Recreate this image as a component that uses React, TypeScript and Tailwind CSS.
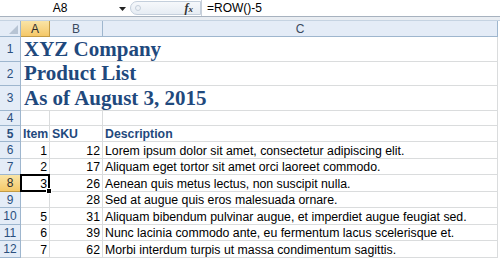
import React from "react";

const rows = [
  { n: 6, item: "1", sku: "12", desc: "Lorem ipsum dolor sit amet, consectetur adipiscing elit.", h: "h-[17px]" },
  { n: 7, item: "2", sku: "17", desc: "Aliquam eget tortor sit amet orci laoreet commodo.", h: "h-[16px]" },
  { n: 8, item: "3", sku: "26", desc: "Aenean quis metus lectus, non suscipit nulla.", h: "h-[17px]", active: true },
  { n: 9, item: "", sku: "28", desc: "Sed at augue quis eros malesuada ornare.", h: "h-[16px]" },
  { n: 10, item: "5", sku: "31", desc: "Aliquam bibendum pulvinar augue, et imperdiet augue feugiat sed.", h: "h-[17px]" },
  { n: 11, item: "6", sku: "39", desc: "Nunc lacinia commodo ante, eu fermentum lacus scelerisque et.", h: "h-[16px]" },
  { n: 12, item: "7", sku: "62", desc: "Morbi interdum turpis ut massa condimentum sagittis.", h: "h-[17px]" },
];

const titles = [
  { n: 1, text: "XYZ Company", h: "h-[25px]" },
  { n: 2, text: "Product List", h: "h-[24px]" },
  { n: 3, text: "As of August 3, 2015", h: "h-[25px]" },
];

function RowHead({ n, active }: { n: number; active?: boolean }) {
  return (
    <div
      className={`w-[21px] shrink-0 flex items-center justify-center border-r border-b text-[12px] ${
        active
          ? "bg-gradient-to-b from-[#f9e4a6] to-[#f5c867] text-[#2c2c2c] border-[#c29b45]"
          : "bg-[#e4ecf7] text-[#2a4f7e] border-[#9eb6ce]"
      }`}
    >
      {n}
    </div>
  );
}

export default function App() {
  return (
    <div className="w-[500px] h-[258px] overflow-hidden bg-white font-['Liberation_Sans',Arial,sans-serif] text-[12.3px] text-black">
      {/* formula bar */}
      <div className="h-[17px] flex border-b border-[#a7b2bf] bg-white">
        <div className="w-[130px] flex items-center relative">
          <span className="flex-1 text-center pr-[10px] text-[12px]">A8</span>
          <svg width="7" height="4" viewBox="0 0 7 4" className="absolute right-[4px] top-[7px]">
            <path d="M0 0h7L3.5 4z" fill="#222" />
          </svg>
        </div>
        <div className="w-[71px] my-[1px] rounded-l-full border border-[#c4cfdc] bg-gradient-to-b from-[#f6f8fb] to-[#e6ecf3] flex items-center justify-between pl-[4px] pr-[7px]">
          <span className="w-[6px] h-[6px] rounded-full border border-[#c5cfdb] bg-[#eef2f7]" />
          <span className="font-['Liberation_Serif',serif] italic font-bold text-[12px] text-[#333]">
            f<span className="text-[9px]">x</span>
          </span>
        </div>
        <div className="flex-1 flex items-center pl-[5px] border-l border-[#c8d0da] text-[12px]">=ROW()-5</div>
      </div>
      <div className="h-[3px] bg-[#e9edf2]" />
      {/* column headers */}
      <div className="h-[17px] flex border-t border-[#c5d3e2] text-[12px]">
        <div className="w-[21px] bg-[#e4ecf7] border-r border-b border-[#9eb6ce] relative">
          <svg width="9" height="9" viewBox="0 0 9 9" className="absolute right-[2px] bottom-[2px]">
            <path d="M9 0v9H0z" fill="#b7c4d4" />
          </svg>
        </div>
        <div className="w-[29px] flex items-center justify-center border-r border-b border-[#c29b45] bg-gradient-to-b from-[#f9e4a6] to-[#f5c867] text-[#2c2c2c]">
          A
        </div>
        <div className="w-[53px] flex items-center justify-center border-r border-b border-[#9eb6ce] bg-[#e4ecf7] text-[#3a4a5e]">
          B
        </div>
        <div className="w-[395px] flex items-center justify-center border-r border-b border-[#9eb6ce] bg-[#e4ecf7] text-[#3a4a5e]">
          C
        </div>
        <div className="flex-1 bg-white" />
      </div>
      {/* title rows */}
      {titles.map((t) => (
        <div key={t.n} className={`${t.h} flex`}>
          <RowHead n={t.n} />
          <div className="w-[477px] border-r border-b border-[#dadcdd] flex items-end pl-[3px] font-['Liberation_Serif',serif] font-bold text-[21px] leading-[23px] text-[#1f497d]">
            {t.text}
          </div>
        </div>
      ))}
      {/* empty row 4 */}
      <div className="h-[15px] flex">
        <RowHead n={4} />
        <div className="w-[29px] border-r border-b border-[#dadcdd]" />
        <div className="w-[53px] border-r border-b border-[#dadcdd]" />
        <div className="w-[395px] border-r border-b border-[#dadcdd]" />
      </div>
      {/* header row 5 */}
      <div className="h-[16px] flex font-bold text-[#1f497d]">
        <RowHead n={5} />
        <div className="w-[29px] border-r border-b border-[#dadcdd] flex items-end pl-[2px] leading-[14px]">Item</div>
        <div className="w-[53px] border-r border-b border-[#dadcdd] flex items-end pl-[2px] leading-[14px]">SKU</div>
        <div className="w-[395px] border-r border-b border-[#dadcdd] flex items-end pl-[2px] leading-[14px]">Description</div>
      </div>
      {rows.map((r) => (
        <div key={r.n} className={`${r.h} flex`}>
          <RowHead n={r.n} active={r.active} />
          <div className="w-[29px] border-r border-b border-[#dadcdd] flex items-end justify-end pr-[2px] leading-[14px] relative">
            {r.item}
            {r.active && (
              <span className="absolute z-10 -left-[1px] -top-[1px] -right-[1px] -bottom-[1px] border-2 border-black">
                <span className="absolute -right-[4px] -bottom-[4px] w-[6px] h-[6px] bg-black border border-white" />
              </span>
            )}
          </div>
          <div className="w-[53px] border-r border-b border-[#dadcdd] flex items-end justify-end pr-[2px] leading-[14px]">
            {r.sku}
          </div>
          <div className="w-[395px] border-r border-b border-[#dadcdd] flex items-end pl-[2px] leading-[14px] whitespace-nowrap">
            {r.desc}
          </div>
        </div>
      ))}
    </div>
  );
}
